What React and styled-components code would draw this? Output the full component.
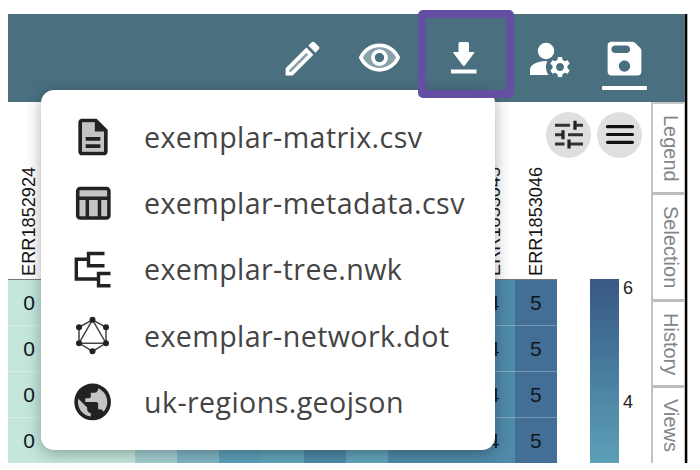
import React from "react";
import styled, { createGlobalStyle } from "styled-components";

const GlobalStyle = createGlobalStyle`
  * { box-sizing: border-box; }
  body {
    margin: 0;
    background: #fff;
    overflow: hidden;
    font-family: "Liberation Sans", Arial, sans-serif;
  }
`;

const Page = styled.div`
  width: 700px;
  height: 470px;
  padding: 14px 0 0 8px;
`;

const Frame = styled.main`
  position: relative;
  width: 680px;
  height: 449px;
  display: flex;
  flex-direction: column;
  border-right: 1px solid #b9ab9c;
`;

const Toolbar = styled.header`
  flex: 0 0 88px;
  display: flex;
  justify-content: flex-end;
  padding-right: 24px;
  background: #4a7080;
  border-right: 2px solid #000;
`;

const ToolButton = styled.button`
  width: ${(p) => p.$width}px;
  height: 88px;
  display: flex;
  flex-direction: column;
  align-items: center;
  justify-content: center;
  flex: none;
  padding: 1px 0 0;
  border: 0;
  background: none;
  color: #fff;
`;

const HighlightedButton = styled(ToolButton)`
  margin-top: -4px;
  padding: 7px 0 0;
  border: 8px solid #644fa3;
  border-radius: 5px;
  z-index: 3;
`;

const SaveButton = styled(ToolButton)`
  padding: 22px 0 0;
  justify-content: flex-start;

  &::after {
    content: "";
    width: 45px;
    height: 4px;
    margin-top: 5px;
    border-radius: 1px;
    background: #fff;
  }
`;

const Body = styled.div`
  flex: 1;
  min-height: 0;
  display: flex;
  overflow: hidden;
  border-right: 2px solid #000;
`;

const Matrix = styled.section`
  flex: 0 0 549px;
  display: grid;
  grid-template-rows: 178px repeat(4, 46px);
  overflow: hidden;
`;

const MatrixRow = styled.div`
  display: grid;
  grid-template-columns: repeat(13, 1fr);
`;

const HeadRow = styled(MatrixRow)`
  border-bottom: 1px solid #777;
`;

const ColumnName = styled.div`
  min-width: 0;
  writing-mode: vertical-rl;
  transform: rotate(180deg);
  padding-top: 3px;
  font-size: 18.2px;
  line-height: 43px;
  color: #161616;
`;

const Cell = styled.div`
  display: flex;
  align-items: center;
  justify-content: center;
  background: ${(p) => p.$fill};
  border-bottom: 1px solid rgba(255, 255, 255, 0.28);
  font-size: 21px;
  color: #10181c;
`;

const SidePanel = styled.section`
  flex: 0 0 94px;
  display: flex;
  flex-direction: column;
`;

const RoundButtons = styled.div`
  height: 177px;
  display: flex;
  gap: 6px;
  padding-top: 10px;
  margin-left: -11px;
`;

const RoundButton = styled.button`
  width: 45px;
  height: 46px;
  flex: none;
  padding: 0;
  border: 0;
  border-radius: 50%;
  background: #dfdfdf;
  display: flex;
  align-items: center;
  justify-content: center;
`;

const Scale = styled.div`
  height: 184px;
  display: flex;
  gap: 4px;
  padding-left: 33px;
`;

const ScaleBar = styled.div`
  width: 29px;
  background: linear-gradient(#395886, #416f94 32%, #4c84a3 60%, #5d9fb7);
`;

const ScaleLabels = styled.div`
  display: flex;
  flex-direction: column;
  gap: 94px;
  margin-top: -1px;
  font-size: 18px;
  line-height: 20px;
  color: #222;
`;

const Tabs = styled.nav`
  flex: 0 0 34px;
  display: flex;
  flex-direction: column;
  border-left: 2px solid #c2c2c2;
  border-top: 2px solid #c8c8c8;
`;

const Tab = styled.div`
  flex: 0 0 ${(p) => p.$size}px;
  writing-mode: vertical-rl;
  padding-top: 11px;
  line-height: 26px;
  white-space: nowrap;
  font-size: 20px;
  color: #858585;
  border-bottom: 3px solid #bebebe;
  border-right: 1px solid #c8c8c8;
  width: 32px;
`;

const MenuClip = styled.div`
  position: absolute;
  inset: 0 3px 0 0;
  overflow: hidden;
  pointer-events: none;
`;

const Menu = styled.ul`
  position: absolute;
  left: 33px;
  top: 76px;
  width: 453.5px;
  height: 360px;
  margin: 0;
  padding: 13.5px 0 0 30px;
  list-style: none;
  background: #fff;
  border-radius: 13px;
  box-shadow: 0 3px 16px rgba(0, 0, 0, 0.32);
`;

const MenuItem = styled.li`
  height: 66.2px;
  display: flex;
  align-items: center;
  gap: 29px;
  font-family: "Open Sans", sans-serif;
  font-size: 28.6px;
  letter-spacing: 0.41px;
  color: #444;
  white-space: nowrap;
`;

const Glyph = styled.svg`
  display: block;
  flex: none;
  width: ${(p) => p.$size || 44}px;
  height: ${(p) => p.$size || 44}px;
  fill: ${(p) => p.$color || "#222"};
`;

const EditIcon = () => (
  <Glyph $size={45} $color="#fff" viewBox="0 0 24 24">
    <path opacity=".35" d="M5 18.08V19h.92l9.06-9.06-.92-.92z" />
    <path d="M20.71 7.04c.39-.39.39-1.02 0-1.41l-2.34-2.34c-.2-.2-.45-.29-.71-.29s-.51.1-.7.29l-1.83 1.83 3.75 3.75 1.83-1.83zM3 17.25V21h3.75L17.81 9.94l-3.75-3.75L3 17.25zM5.92 19H5v-.92l9.06-9.06.92.92L5.92 19z" />
  </Glyph>
);

const EyeIcon = () => (
  <Glyph $size={45} $color="#fff" viewBox="0 0 24 24">
    <path opacity=".35" d="M12 6c-3.79 0-7.17 2.13-8.82 5.5C4.83 14.87 8.21 17 12 17s7.17-2.13 8.82-5.5C19.17 8.13 15.79 6 12 6zm0 10c-2.48 0-4.5-2.02-4.5-4.5S9.52 7 12 7s4.5 2.02 4.5 4.5S14.48 16 12 16z" />
    <path d="M12 4C7 4 2.73 7.11 1 11.5 2.73 15.89 7 19 12 19s9.27-3.11 11-7.5C21.27 7.11 17 4 12 4zm0 13c-3.79 0-7.17-2.13-8.82-5.5C4.83 8.13 8.21 6 12 6s7.17 2.13 8.82 5.5C19.17 14.87 15.79 17 12 17zm0-10c-2.48 0-4.5 2.02-4.5 4.5S9.52 16 12 16s4.5-2.02 4.5-4.5S14.48 7 12 7zm0 7c-1.38 0-2.5-1.12-2.5-2.5S10.62 9 12 9s2.5 1.12 2.5 2.5S13.38 14 12 14z" />
  </Glyph>
);

const DownloadIcon = () => (
  <Glyph $size={44} $color="#fff" viewBox="0 0 44 44">
    <path d="M14.500 7.500q0-1.500 1.500-1.500h7.500q1.500 0 1.500 1.500V16h4.500q1.500 0 .500 1.300L21 29.200q-1.200 1.500-2.400 0L9.500 17.300q-1-1.300.500-1.300h4.500z" />
    <path d="M7 33.500h25.500v4H7z" />
  </Glyph>
);

const ManageAccountsIcon = () => (
  <Glyph $size={48} $color="#fff" viewBox="0.500 0 24 24">
    <circle cx="10" cy="8" r="4.100" />
    <path d="M10.670 13.020c-.22-.01-.44-.02-.67-.02-2.420 0-4.680.67-6.610 1.820-.88.52-1.390 1.500-1.390 2.530V20h9.260c-.79-1.130-1.260-2.510-1.260-4 0-1.070.25-2.070.67-2.980z" />
    <path d="M20.750 16c0-.22-.03-.42-.06-.63l1.140-1.010-1-1.730-1.450.49c-.32-.27-.68-.48-1.080-.63L18 11h-2l-.3 1.490c-.4.15-.76.36-1.080.63l-1.450-.49-1 1.730 1.140 1.010c-.03.21-.06.41-.06.63s.03.42.06.63l-1.140 1.010 1 1.730 1.450-.49c.32.27.68.48 1.080.63L16 21h2l.3-1.490c.4-.15.76-.36 1.080-.63l1.450.49 1-1.730-1.140-1.010c.03-.21.06-.41.06-.63zM17 18c-1.100 0-2-.9-2-2s.9-2 2-2 2 .9 2 2-.9 2-2 2z" />
  </Glyph>
);

const SaveIcon = () => (
  <Glyph $size={45} $color="#fff" viewBox="0 0 24 24">
    <path d="M17.590 3.590c-.38-.38-.89-.59-1.420-.59H5c-1.110 0-2 .9-2 2v14c0 1.100.9 2 2 2h14c1.100 0 2-.9 2-2V7.830c0-.53-.21-1.040-.59-1.410l-2.820-2.830zM12 19c-1.660 0-3-1.340-3-3s1.340-3 3-3 3 1.340 3 3-1.340 3-3 3zm1-10H7c-1.100 0-2-.9-2-2s.9-2 2-2h6c1.100 0 2 .9 2 2s-.9 2-2 2z" />
  </Glyph>
);

const FileIcon = () => (
  <Glyph viewBox="0 0 24 24">
    <path fill="#c4c4c4" d="M13 4H6v16h12V9z" />
    <path d="M8 16h8v2H8zm0-4h8v2H8zm6-10H6c-1.100 0-2 .9-2 2v16c0 1.100.89 2 1.990 2H18c1.100 0 2-.9 2-2V8l-6-6zm4 18H6V4h7v5h5v11z" />
  </Glyph>
);

const TableIcon = () => (
  <Glyph viewBox="0 0 44 44">
    <rect x="6.700" y="7.500" width="31.200" height="29.400" rx="2.500" fill="#c4c4c4" stroke="#222" strokeWidth="3.500" />
    <path fill="none" stroke="#222" strokeWidth="3.500" d="M6 17.300h32M16.300 17v20M28.500 17v20" />
  </Glyph>
);

const TreeIcon = () => (
  <Glyph viewBox="0 0 44 44">
    <path fill="none" stroke="#222" strokeWidth="3.400" d="M33.500 6.500H17.500V18.700H33.500M17.500 12.200H5.300V32H27.500M39.500 26.500H27.500V38.700H39.500" />
  </Glyph>
);

const NetworkIcon = () => (
  <Glyph viewBox="0 0 44 44">
    <path fill="none" stroke="#444" strokeWidth="1.500" d="M21.500 6.800 35 14.300V30.200L21.500 38.300 8 30.200V14.300zM21.500 6.800 35 30.200H8z" />
    {[[21.5, 6.8], [35, 14.3], [35, 30.2], [21.5, 38.3], [8, 30.2], [8, 14.3]].map(([x, y]) => (
      <circle key={`${x}-${y}`} cx={x} cy={y} r="3" />
    ))}
  </Glyph>
);

const GlobeIcon = () => (
  <Glyph viewBox="0.200 -0.500 24 24">
    <circle cx="12" cy="12" r="9" fill="#c4c4c4" />
    <path d="M12 2C6.480 2 2 6.480 2 12s4.480 10 10 10 10-4.480 10-10S17.520 2 12 2zm-1 17.930c-3.950-.49-7-3.850-7-7.930 0-.62.08-1.210.21-1.790L9 15v1c0 1.100.9 2 2 2v1.930zm6.900-2.540c-.26-.81-1-1.390-1.900-1.390h-1v-3c0-.55-.45-1-1-1H8v-2h2c.55 0 1-.45 1-1V7h2c1.100 0 2-.9 2-2v-.41c2.930 1.190 5 4.060 5 7.410 0 2.080-.8 3.970-2.100 5.390z" />
  </Glyph>
);

const TuneIcon = () => (
  <Glyph $size={30} viewBox="0 0 30 30">
    <path fill="none" stroke="#333" strokeWidth="3" d="M1 5.200H16M20 5.200H29M1 14.700H9.500M14 14.700H29M1 24H10.500M15 24H29" />
    <path fill="none" stroke="#222" strokeWidth="3.200" d="M21 .700V9.700M9 10.200V19.200M15 19.500V28.500" />
  </Glyph>
);

const LinesIcon = () => (
  <Glyph $size={30} viewBox="0 0 30 30">
    <path fill="none" stroke="#111" strokeWidth="3.200" strokeLinecap="round" d="M2.500 6.700H27.500M2.500 14.500H27.500M2.500 22.300H27.500" />
  </Glyph>
);

const columns = [
  { name: "ERR1852924", value: 0, fill: "#c5e7db" },
  { value: 0, fill: "#c5e7db" },
  { value: 0, fill: "#c5e7db" },
  { value: 1, fill: "#a2cfd2" },
  { value: 2, fill: "#81b5c5" },
  { value: 3, fill: "#5e9fba" },
  { value: 3, fill: "#62a4bb" },
  { value: 4, fill: "#4f8aa9" },
  { value: 3, fill: "#62a4bb" },
  { value: 4, fill: "#4f8aa9" },
  { value: 4, fill: "#4f8aa9" },
  { name: "ERR1853045", value: 4, fill: "#4f8aa9" },
  { name: "ERR1853046", value: 5, fill: "#436f96" },
];

const files = [
  { name: "exemplar-matrix.csv", Icon: FileIcon },
  { name: "exemplar-metadata.csv", Icon: TableIcon },
  { name: "exemplar-tree.nwk", Icon: TreeIcon },
  { name: "exemplar-network.dot", Icon: NetworkIcon },
  { name: "uk-regions.geojson", Icon: GlobeIcon },
];

const tabs = [
  ["Legend", 91],
  ["Selection", 107],
  ["History", 86],
  ["Views", 90],
];

export default function App() {
  return (
    <Page>
      <GlobalStyle />
      <Frame>
        <Toolbar>
          <ToolButton $width={76}><EditIcon /></ToolButton>
          <ToolButton $width={78}><EyeIcon /></ToolButton>
          <HighlightedButton $width={96}><DownloadIcon /></HighlightedButton>
          <ToolButton $width={74}><ManageAccountsIcon /></ToolButton>
          <SaveButton $width={73}><SaveIcon /></SaveButton>
        </Toolbar>
        <Body>
          <Matrix>
            <HeadRow>
              {columns.map((c, i) => <ColumnName key={i}>{c.name}</ColumnName>)}
            </HeadRow>
            {[0, 1, 2, 3].map((row) => (
              <MatrixRow key={row}>
                {columns.map((c, i) => (
                  <Cell key={i} $fill={c.fill}>{c.name ? c.value : null}</Cell>
                ))}
              </MatrixRow>
            ))}
          </Matrix>
          <SidePanel>
            <RoundButtons>
              <RoundButton><TuneIcon /></RoundButton>
              <RoundButton><LinesIcon /></RoundButton>
            </RoundButtons>
            <Scale>
              <ScaleBar />
              <ScaleLabels><span>6</span><span>4</span></ScaleLabels>
            </Scale>
          </SidePanel>
          <Tabs>
            {tabs.map(([name, size]) => <Tab key={name} $size={size}>{name}</Tab>)}
          </Tabs>
        </Body>
        <MenuClip>
          <Menu>
            {files.map(({ name, Icon }) => (
              <MenuItem key={name}><Icon />{name}</MenuItem>
            ))}
          </Menu>
        </MenuClip>
      </Frame>
    </Page>
  );
}
